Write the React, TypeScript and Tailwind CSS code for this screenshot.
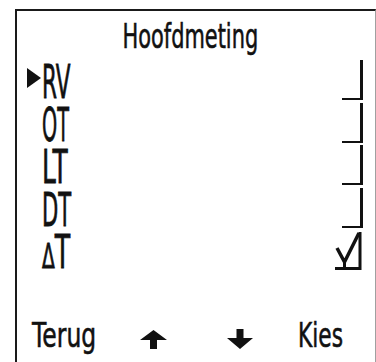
import React from "react";

const font = { fontFamily: '"DejaVu Sans", "Liberation Sans", sans-serif' };

function Box() {
  return <div className="w-[21px] h-[40px] border-r-[3px] border-b-[2px] border-[#111]" />;
}

function CheckBox() {
  return (
    <svg width="28" height="38" viewBox="0 0 28 38" className="block">
      <path d="M25 0 V36.5 H0" fill="none" stroke="#111" strokeWidth="3" />
      <path d="M2 16 L9.5 30 L24 1" fill="none" stroke="#111" strokeWidth="3.5" strokeLinejoin="miter" />
      <path d="M9.5 30 V36" fill="none" stroke="#111" strokeWidth="3" />
    </svg>
  );
}

function Row({ label, scale, selected, checked }: { label: React.ReactNode; scale: string; selected?: boolean; checked?: boolean }) {
  return (
    <div className="flex items-end h-[42.5px]">
      <div className="w-[25px] h-full flex items-start">
        {selected && (
          <svg width="14" height="20" viewBox="0 0 14 20" className="ml-[10px] mt-[10px] block">
            <polygon points="0,0 14,10 0,20" fill="#111" />
          </svg>
        )}
      </div>
      <div className="w-[36px] h-[36px] whitespace-nowrap">
        <span
          className={`inline-block origin-left text-[46px] leading-[36px] text-[#111] [-webkit-text-stroke:0.8px_#111] ${scale}`}
          style={font}
        >
          {label}
        </span>
      </div>
      <div className="flex-1" />
      <div className="mr-[12px]">{checked ? <CheckBox /> : <Box />}</div>
    </div>
  );
}

export default function App() {
  return (
    <div className="w-[376px] h-[362px] bg-white pt-[9px] pl-[15px] overflow-hidden">
      <div className="w-[361px] h-[353px] border-t-2 border-l-2 border-[#1a1a1a] border-r border-r-[#a0a0a0] flex flex-col">
        <div className="mt-[7.5px] h-[34px] flex justify-center pr-[12px]">
          <span className="inline-block text-[34px] leading-[34px] text-[#111] scale-x-[0.615] whitespace-nowrap [-webkit-text-stroke:0.6px_#111]" style={font}>
            Hoofdmeting
          </span>
        </div>
        <div className="mt-[5px] flex flex-col">
          <Row label="RV" scale="scale-x-[0.47]" selected />
          <Row label="OT" scale="scale-x-[0.42]" />
          <Row label="LT" scale="scale-x-[0.54]" />
          <Row label="DT" scale="scale-x-[0.46]" />
          <Row
            label={
              <>
                <span className="text-[34px]">Δ</span>T
              </>
            }
            scale="scale-x-[0.55]"
            checked
          />
        </div>
        <div className="mt-[48px] h-[34px] flex items-start pl-[15px]">
          <div className="w-[108px] whitespace-nowrap">
            <span className="inline-block origin-left text-[34px] leading-[34px] text-[#111] scale-x-[0.69] [-webkit-text-stroke:0.6px_#111]" style={font}>
              Terug
            </span>
          </div>
          <svg width="27" height="19" viewBox="0 0 27 19" className="block mt-[12px]">
            <polygon points="13.5,0 27,10 17,10 17,19 10,19 10,10 0,10" fill="#111" />
          </svg>
          <div className="w-[60px]" />
          <svg width="26" height="20" viewBox="0 0 26 20" className="block mt-[11px]">
            <polygon points="9.5,0 16.5,0 16.5,9 26,9 13,20 0,9 9.5,9" fill="#111" />
          </svg>
          <div className="w-[45px]" />
          <div className="whitespace-nowrap">
            <span className="inline-block origin-left text-[34px] leading-[34px] text-[#111] scale-x-[0.64] [-webkit-text-stroke:0.6px_#111]" style={font}>
              Kies
            </span>
          </div>
        </div>
      </div>
    </div>
  );
}
